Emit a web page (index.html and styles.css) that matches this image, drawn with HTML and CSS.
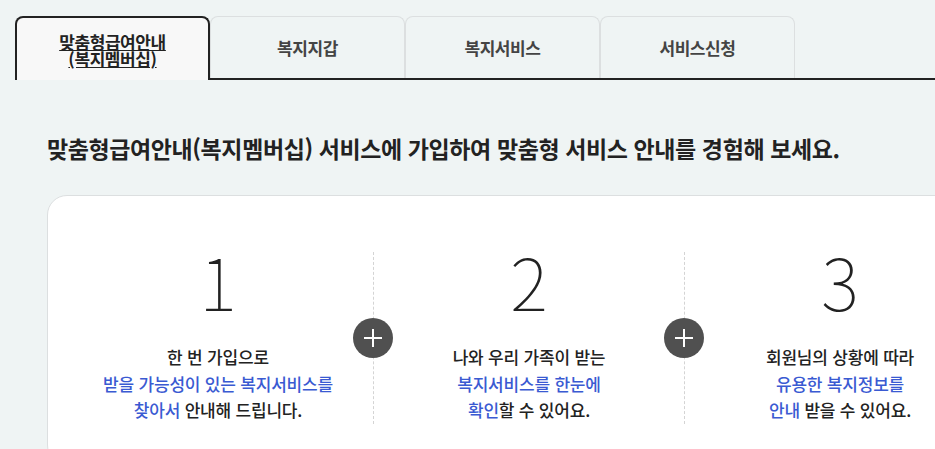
FILE: index.html
```html
<!DOCTYPE html>
<html lang="ko">
<head>
    <meta charset="UTF-8">
    <meta name="viewport" content="width=device-width, initial-scale=1.0">
    <title>맞춤형급여안내</title>
    <link rel="stylesheet" href="styles.css">
</head>
<body>

    <div class="page">
        <ul class="tabs">
            <li class="tab active"><a href="#">맞춤형급여안내<br>(복지멤버십)</a></li>
            <li class="tab"><a href="#">복지지갑</a></li>
            <li class="tab"><a href="#">복지서비스</a></li>
            <li class="tab"><a href="#">서비스신청</a></li>
        </ul>

        <h2 class="intro">맞춤형급여안내(복지멤버십) 서비스에 가입하여 맞춤형 서비스 안내를 경험해 보세요.</h2>

        <div class="steps-card">
            <div class="step">
                <div class="step-num">1</div>
                <p class="step-text">한 번 가입으로<br><em>받을 가능성이 있는 복지서비스를<br>찾아서</em> 안내해 드립니다.</p>
                <span class="plus"></span>
            </div>
            <div class="step">
                <div class="step-num">2</div>
                <p class="step-text">나와 우리 가족이 받는<br><em>복지서비스를 한눈에<br>확인</em>할 수 있어요.</p>
                <span class="plus"></span>
            </div>
            <div class="step">
                <div class="step-num">3</div>
                <p class="step-text">회원님의 상황에 따라<br><em>유용한 복지정보를<br>안내</em> 받을 수 있어요.</p>
            </div>
        </div>
    </div>

</body>
</html>
```

FILE: styles.css
```css
body {
    font-family: "Noto Sans CJK KR", "Noto Sans", sans-serif;
    background-color: #eff4f4;
    color: #222;
    margin: 0;
    padding: 0;
    overflow: hidden;
}
.page {
    width: 1200px;
    padding: 16px 0 0 15px;
}
.tabs {
    display: flex;
    list-style: none;
    margin: 0;
    padding: 0;
    border-bottom: 2px solid #222;
}
.tab {
    width: 195px;
    height: 62px;
    box-sizing: border-box;
    border: 1px solid #dcdfe0;
    border-bottom: none;
    border-radius: 8px 8px 0 0;
}
.tab a {
    display: flex;
    align-items: center;
    justify-content: center;
    height: 100%;
    text-align: center;
    font-size: 17px;
    font-weight: 700;
    color: #444;
    text-decoration: none;
    line-height: 17px;
    letter-spacing: -0.4px;
}
.tab.active {
    height: 64px;
    margin-bottom: -2px;
    border: 2px solid #222;
    border-bottom: none;
    background: #f8f8f8;
}
.tab.active a {
    color: #222;
    text-decoration: underline;
    text-underline-offset: 1px;
    padding-top: 1px;
}
.intro {
    margin: 52px 0 0 32px;
    font-size: 23px;
    font-weight: 700;
    letter-spacing: -0.4px;
    line-height: 32px;
    color: #222;
}
.steps-card {
    display: flex;
    margin: 31px 0 0 32px;
    padding: 56px 0 40px 15px;
    background: #fff;
    border: 1px solid #dcdfe0;
    border-radius: 20px;
}
.step {
    position: relative;
    width: 310px;
    text-align: center;
}
.step + .step {
    border-left: 1px dashed #d4d4d4;
}
.step-num {
    font-size: 72px;
    font-weight: 100;
    line-height: 55px;
    color: #222;
}
.step-text {
    margin: 37px 0 0;
    font-size: 17px;
    font-weight: 500;
    line-height: 26.5px;
    letter-spacing: -0.2px;
}
.step-text em {
    font-style: normal;
    color: #3a5ad2;
}
.plus {
    position: absolute;
    right: -20px;
    top: 50%;
    width: 40px;
    height: 40px;
    margin-top: -20px;
    border-radius: 50%;
    background: #505050;
    z-index: 1;
}
.plus::before,
.plus::after {
    content: "";
    position: absolute;
    left: 50%;
    top: 50%;
    background: #fff;
}
.plus::before {
    width: 18px;
    height: 2px;
    margin: -1px 0 0 -9px;
}
.plus::after {
    width: 2px;
    height: 18px;
    margin: -9px 0 0 -1px;
}
```
